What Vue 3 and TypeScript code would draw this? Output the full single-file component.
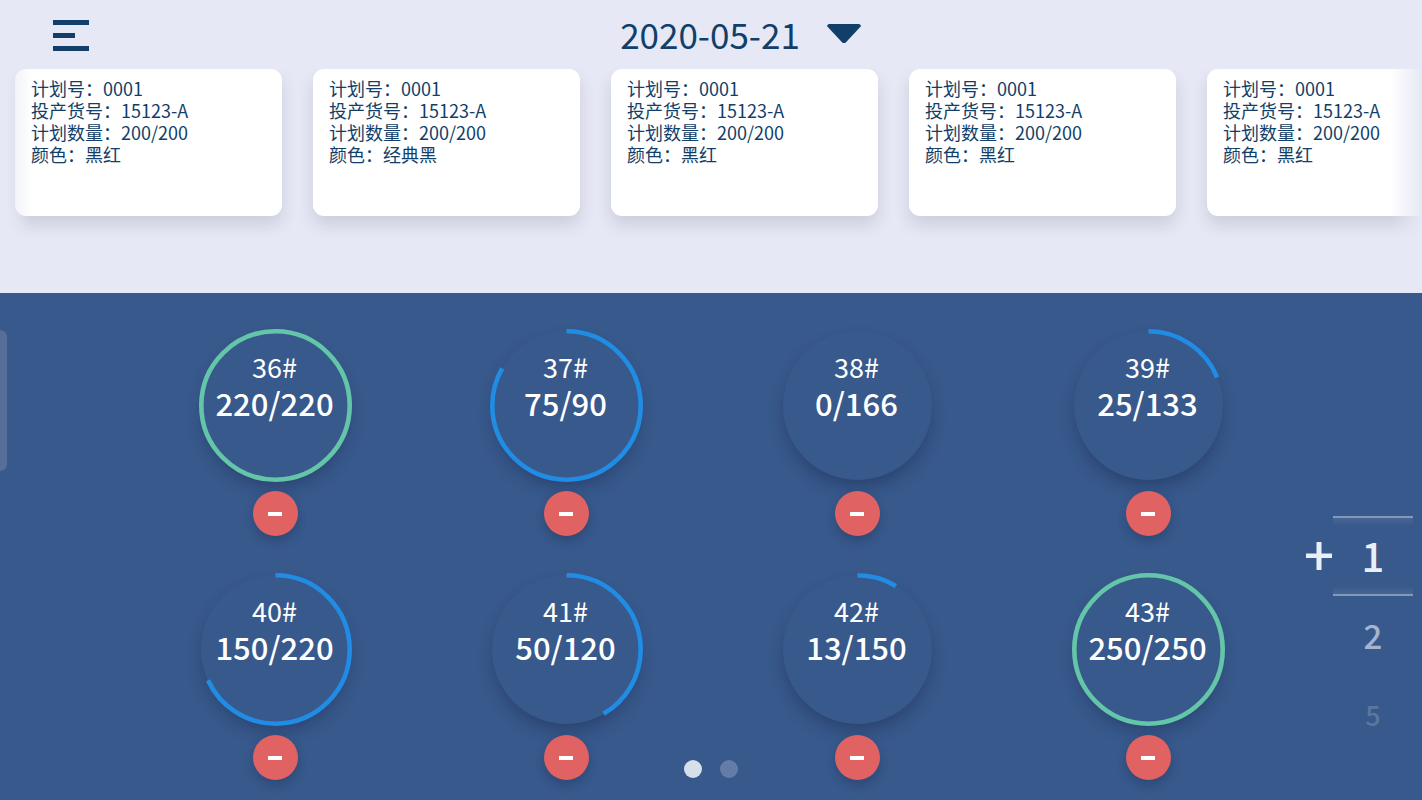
<script setup lang="ts">
import { ref } from 'vue'

interface Plan {
  id: number
  planNo: string
  itemNo: string
  quantity: string
  color: string
}

interface Station {
  no: number
  done: number
  total: number
}

const date = ref('2020-05-21')

const plans: Plan[] = ['黑红', '经典黑', '黑红', '黑红', '黑红'].map((color, id) => ({
  id,
  planNo: '0001',
  itemNo: '15123-A',
  quantity: '200/200',
  color,
}))

const stations = ref<Station[]>([
  { no: 36, done: 220, total: 220 },
  { no: 37, done: 75, total: 90 },
  { no: 38, done: 0, total: 166 },
  { no: 39, done: 25, total: 133 },
  { no: 40, done: 150, total: 220 },
  { no: 41, done: 50, total: 120 },
  { no: 42, done: 13, total: 150 },
  { no: 43, done: 250, total: 250 },
])

const steps = [1, 2, 5]
const step = ref(1)
const page = ref(0)

function percent(s: Station): number {
  return (s.done / s.total) * 100
}

function decrease(s: Station): void {
  s.done = Math.max(0, s.done - step.value)
}
</script>

<template>
  <div class="page">
    <section class="top">
      <header class="bar">
        <button class="menu" type="button" aria-label="菜单">
          <svg width="36" height="31" viewBox="0 0 36 31" aria-hidden="true">
            <path d="M0 0h36v5H0zM0 13h22v5H0zM0 26h36v5H0z" fill="#123f69" />
          </svg>
        </button>
        <button class="date" type="button">
          <span>{{ date }}</span>
          <svg width="34" height="20" viewBox="0 0 34 20" aria-hidden="true">
            <path d="M2 0H32Q35 1 33.200 3L19 18.200Q17 20 15 18.200L.8 3Q-1 1 2 0Z" fill="#123f69" />
          </svg>
        </button>
      </header>
      <div class="plans">
        <article v-for="p in plans" :key="p.id" class="plan">
          <p>计划号：{{ p.planNo }}</p>
          <p>投产货号：{{ p.itemNo }}</p>
          <p>计划数量：{{ p.quantity }}</p>
          <p>颜色：{{ p.color }}</p>
        </article>
      </div>
    </section>

    <main class="panel">
      <div class="side">
        <button class="handle" type="button" aria-label="展开侧栏"></button>
      </div>

      <div class="stations">
        <div v-for="s in stations" :key="s.no" class="station">
          <div class="dial">
            <svg class="ring" viewBox="0 0 153 153" aria-hidden="true">
              <circle
                v-if="s.done > 0"
                cx="76.500"
                cy="76.500"
                r="74.200"
                pathLength="100"
                :class="['arc', { full: s.done >= s.total }]"
                :stroke-dasharray="s.done >= s.total ? undefined : `${percent(s)} 100`"
                stroke-width="4.600"
                transform="rotate(-90 76.500 76.500)"
              />
            </svg>
            <span class="no">{{ s.no }}#</span>
            <span class="count">{{ s.done }}/{{ s.total }}</span>
          </div>
          <button class="minus" type="button" :aria-label="`${s.no}# 减少`" @click="decrease(s)">
            <svg width="14" height="4" viewBox="0 0 14 4" aria-hidden="true">
              <path d="M0 0h14v4H0z" fill="#fff" />
            </svg>
          </button>
        </div>
      </div>

      <div class="picker">
        <svg class="plus" width="26" height="28" viewBox="0 0 26 28" aria-hidden="true">
          <path d="M10.500 0h5v11.500H26v4.500H15.500v12h-5V16H0v-4.500h10.500z" fill="#e9eff8" />
        </svg>
        <div class="wheel">
          <button
            v-for="(n, i) in steps"
            :key="n"
            type="button"
            :class="['step', `level-${i}`]"
            @click="step = n"
          >
            {{ n }}
          </button>
        </div>
      </div>

      <nav class="dots" aria-label="分页">
        <button
          v-for="i in 2"
          :key="i"
          type="button"
          :class="['dot', { active: page === i - 1 }]"
          :aria-label="`第${i}页`"
          @click="page = i - 1"
        ></button>
      </nav>
    </main>
  </div>
</template>

<style>
body {
  margin: 0;
}
</style>

<style scoped>
.page {
  display: flex;
  flex-direction: column;
  min-height: 100vh;
  overflow: hidden;
  background: #e6e8f5;
  color: #123f69;
  font-family: "Noto Sans CJK SC", "Noto Sans", sans-serif;
}

button {
  margin: 0;
  padding: 0;
  border: 0;
  background: none;
  color: inherit;
  font: inherit;
  cursor: pointer;
}

svg {
  display: block;
}

.top {
  padding-bottom: 37px;
}

.bar {
  display: grid;
  grid-template-columns: 1fr auto 1fr;
  align-items: center;
  box-sizing: border-box;
  height: 69px;
  padding-top: 2px;
}

.menu {
  justify-self: start;
  margin-left: 53px;
}

.date {
  display: flex;
  align-items: center;
  gap: 27px;
  padding: 0 0 4px 59px;
  font-size: 35px;
  line-height: 52px;
}

.plans {
  position: relative;
  display: flex;
  gap: 31px;
  padding: 0 15px 40px;
  overflow: hidden;
}

.plans::before,
.plans::after {
  content: "";
  position: absolute;
  top: 0;
  bottom: 0;
  z-index: 1;
  width: 32px;
}

.plans::before {
  left: 0;
  background: linear-gradient(to right, #e6e8f5, rgba(230, 232, 245, 0));
}

.plans::after {
  right: 0;
  background: linear-gradient(to left, #e6e8f5, rgba(230, 232, 245, 0));
}

.plan {
  flex: none;
  box-sizing: border-box;
  width: 267px;
  min-height: 147px;
  padding: 8px 16px;
  border-radius: 11px;
  background: #fff;
  box-shadow: 0 9px 16px rgba(40, 50, 80, 0.14);
  font-size: 18px;
  line-height: 22px;
}

.plan p {
  margin: 0;
  white-space: nowrap;
}

.panel {
  position: relative;
  flex: 1;
  display: grid;
  grid-template-columns: 130px 1fr 128px;
  background: #38598c;
  color: #fff;
}

.side {
  padding-top: 37px;
}

.handle {
  display: block;
  width: 7px;
  height: 141px;
  border-radius: 0 7px 7px 0;
  background: #566f99;
}

.stations {
  display: grid;
  grid-template-columns: repeat(4, 1fr);
  align-content: start;
  row-gap: 37px;
  padding: 36px 0 19px;
}

.station {
  display: flex;
  flex-direction: column;
  align-items: center;
  gap: 9px;
}

.dial {
  position: relative;
  display: flex;
  flex-direction: column;
  align-items: center;
  box-sizing: border-box;
  width: 153px;
  height: 153px;
  padding: 20px 2px 0 0;
}

.dial::before {
  content: "";
  position: absolute;
  inset: 2px;
  border-radius: 50%;
  background: #38598c;
  box-shadow: 0 9px 16px -2px rgba(20, 35, 70, 0.4);
}

.ring {
  position: absolute;
  inset: 0;
}

.arc {
  fill: none;
  stroke: #218ce4;
}

.arc.full {
  stroke: #64c6a8;
}

.no,
.count {
  position: relative;
  line-height: 36px;
}

.no {
  font-size: 27px;
}

.count {
  font-size: 31px;
  font-weight: 500;
}

.minus {
  position: relative;
  display: flex;
  align-items: center;
  justify-content: center;
  box-sizing: border-box;
  width: 45px;
  height: 45px;
  padding-right: 2px;
  border-radius: 50%;
  background: #e06263;
  box-shadow: 0 5px 10px rgba(20, 35, 70, 0.3);
}

.picker {
  display: flex;
  align-items: flex-start;
  justify-content: flex-end;
  padding: 223px 9px 0 0;
}

.plus {
  margin: 26px 1px 0 0;
}

.wheel {
  width: 80px;
}

.step {
  display: block;
  box-sizing: border-box;
  width: 80px;
  height: 80px;
  padding-bottom: 3px;
  font-weight: 500;
}

.level-0 {
  border-top: 2px solid #8297b9;
  border-bottom: 2px solid #8297b9;
  background:
    linear-gradient(to bottom, rgba(255, 255, 255, 0.08), transparent 8px),
    linear-gradient(to top, rgba(255, 255, 255, 0.08), transparent 8px);
  color: #e9eff8;
  font-size: 40px;
}

.level-1 {
  color: #a5b4ce;
  font-size: 33px;
}

.level-2 {
  color: #5c769f;
  font-size: 27px;
}

.dots {
  position: absolute;
  bottom: 22px;
  left: 0;
  right: 0;
  display: flex;
  justify-content: center;
  gap: 18px;
  pointer-events: none;
}

.dot {
  width: 18px;
  height: 18px;
  border-radius: 50%;
  background: #647da6;
  pointer-events: auto;
}

.dot.active {
  background: #d7dfeb;
}
</style>
